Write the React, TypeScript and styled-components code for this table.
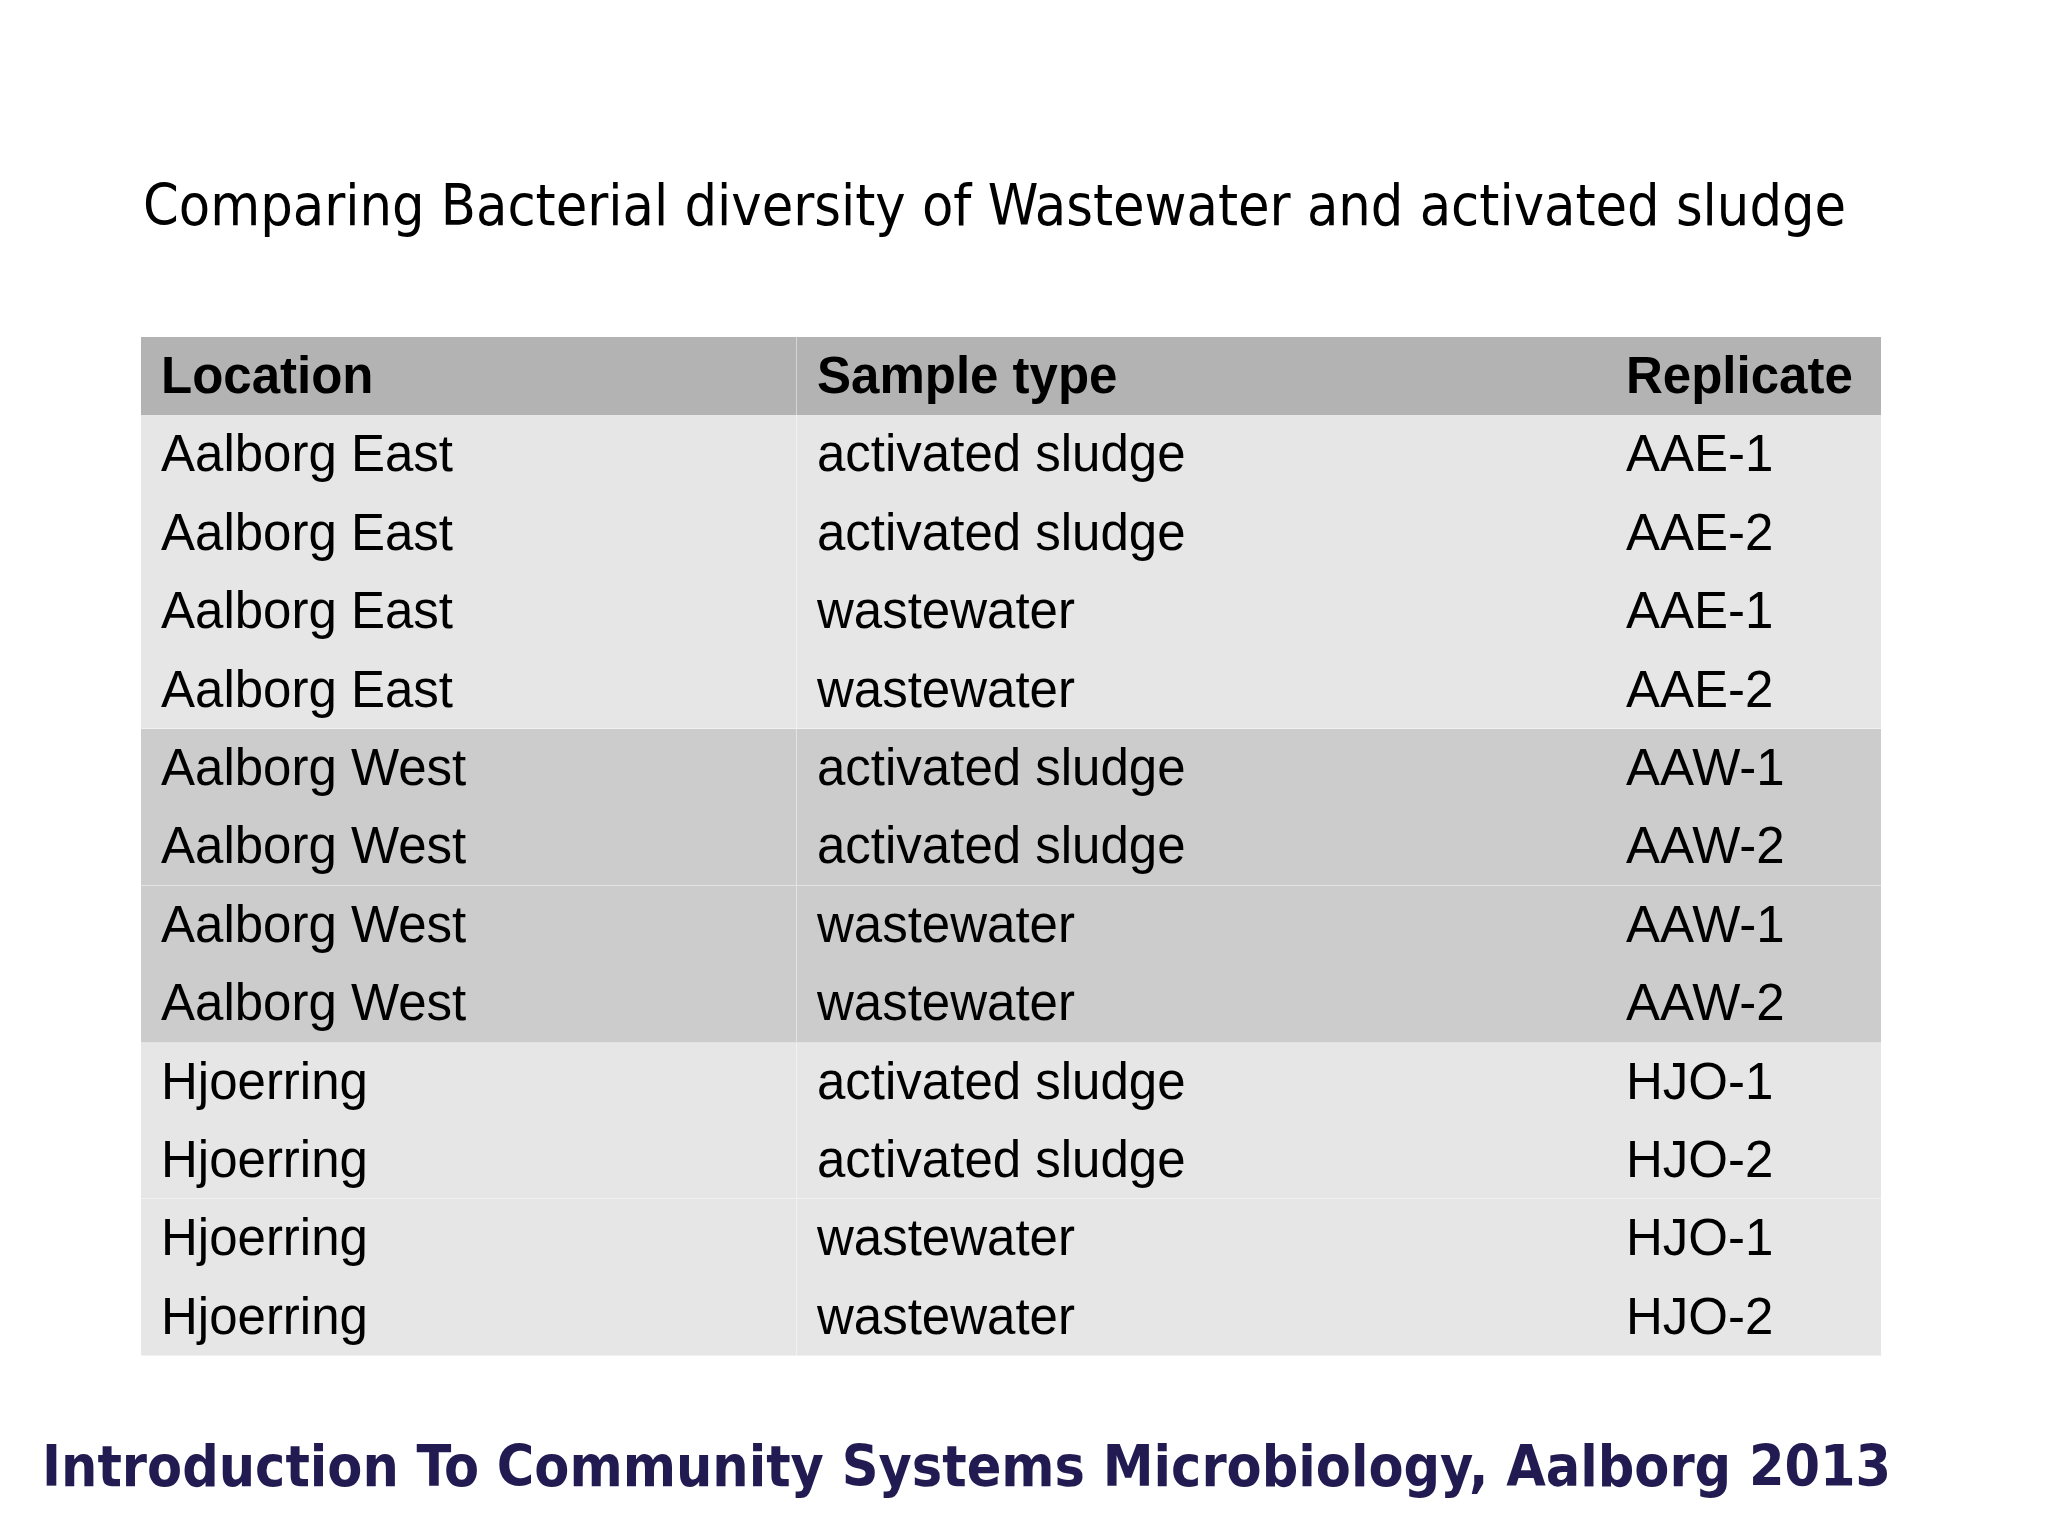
import React from "react";
import styled, { createGlobalStyle } from "styled-components";

const Global = createGlobalStyle`
  html, body { margin: 0; padding: 0; background: #ffffff; }
  #root { width: 2048px; height: 1536px; }
`;

const Slide = styled.div`
  width: 2048px;
  height: 1536px;
  background: #ffffff;
  display: flex;
  flex-direction: column;
  box-sizing: border-box;
  padding-top: 171px;
  overflow: hidden;
`;

const Title = styled.h1`
  margin: 0 0 0 143px;
  font-family: "DejaVu Sans Condensed", "DejaVu Sans", Verdana, sans-serif;
  font-stretch: semi-condensed;
  font-weight: normal;
  font-size: 57px;
  line-height: 68px;
  color: #000000;
  white-space: nowrap;
`;

const Table = styled.div`
  margin: 98px 0 0 141px;
  width: 1740px;
  display: grid;
  grid-template-columns: 656px 809px 275px;
  grid-auto-rows: 78.4px;
  font-family: "Liberation Sans", Arial, sans-serif;
  font-size: 51px;
  color: #000000;
`;

type Tone = "head" | "light" | "mid";

const bg: Record<Tone, string> = {
  head: "#b3b3b3",
  light: "#e6e6e6",
  mid: "#cccccc",
};

const Cell = styled.div<{ $tone: Tone; $divider?: boolean; $rule?: boolean }>`
  background: ${(p) => bg[p.$tone]};
  font-weight: ${(p) => (p.$tone === "head" ? "bold" : "normal")};
  line-height: 78.4px;
  padding-left: 20px;
  white-space: nowrap;
  box-sizing: border-box;
  border-right: ${(p) => (p.$divider ? "1px solid rgba(255,255,255,0.45)" : "none")};
  box-shadow: ${(p) => (p.$rule ? "inset 0 -1px 0 rgba(255,255,255,0.45)" : "none")};
`;

const Footer = styled.div`
  margin: 76px 0 0 42px;
  font-family: "DejaVu Sans Condensed", "DejaVu Sans", Verdana, sans-serif;
  font-stretch: semi-condensed;
  font-weight: bold;
  font-size: 56.8px;
  line-height: 68px;
  color: #211b51;
  white-space: nowrap;
`;

type Row = { loc: string; type: string; rep: string; tone: Tone; rule?: boolean };

const rows: Row[] = [
  { loc: "Aalborg East", type: "activated sludge", rep: "AAE-1", tone: "light" },
  { loc: "Aalborg East", type: "activated sludge", rep: "AAE-2", tone: "light" },
  { loc: "Aalborg East", type: "wastewater", rep: "AAE-1", tone: "light" },
  { loc: "Aalborg East", type: "wastewater", rep: "AAE-2", tone: "light", rule: true },
  { loc: "Aalborg West", type: "activated sludge", rep: "AAW-1", tone: "mid" },
  { loc: "Aalborg West", type: "activated sludge", rep: "AAW-2", tone: "mid", rule: true },
  { loc: "Aalborg West", type: "wastewater", rep: "AAW-1", tone: "mid" },
  { loc: "Aalborg West", type: "wastewater", rep: "AAW-2", tone: "mid", rule: true },
  { loc: "Hjoerring", type: "activated sludge", rep: "HJO-1", tone: "light" },
  { loc: "Hjoerring", type: "activated sludge", rep: "HJO-2", tone: "light", rule: true },
  { loc: "Hjoerring", type: "wastewater", rep: "HJO-1", tone: "light" },
  { loc: "Hjoerring", type: "wastewater", rep: "HJO-2", tone: "light", rule: true },
];

export default function App() {
  return (
    <>
      <Global />
      <Slide>
        <Title>Comparing Bacterial diversity of Wastewater and activated sludge</Title>
        <Table>
          <Cell $tone="head" $divider>Location</Cell>
          <Cell $tone="head">Sample type</Cell>
          <Cell $tone="head">Replicate</Cell>
          {rows.map((r, i) => (
            <React.Fragment key={i}>
              <Cell $tone={r.tone} $divider $rule={r.rule}>{r.loc}</Cell>
              <Cell $tone={r.tone} $rule={r.rule}>{r.type}</Cell>
              <Cell $tone={r.tone} $rule={r.rule}>{r.rep}</Cell>
            </React.Fragment>
          ))}
        </Table>
        <Footer>Introduction To Community Systems Microbiology, Aalborg 2013</Footer>
      </Slide>
    </>
  );
}
